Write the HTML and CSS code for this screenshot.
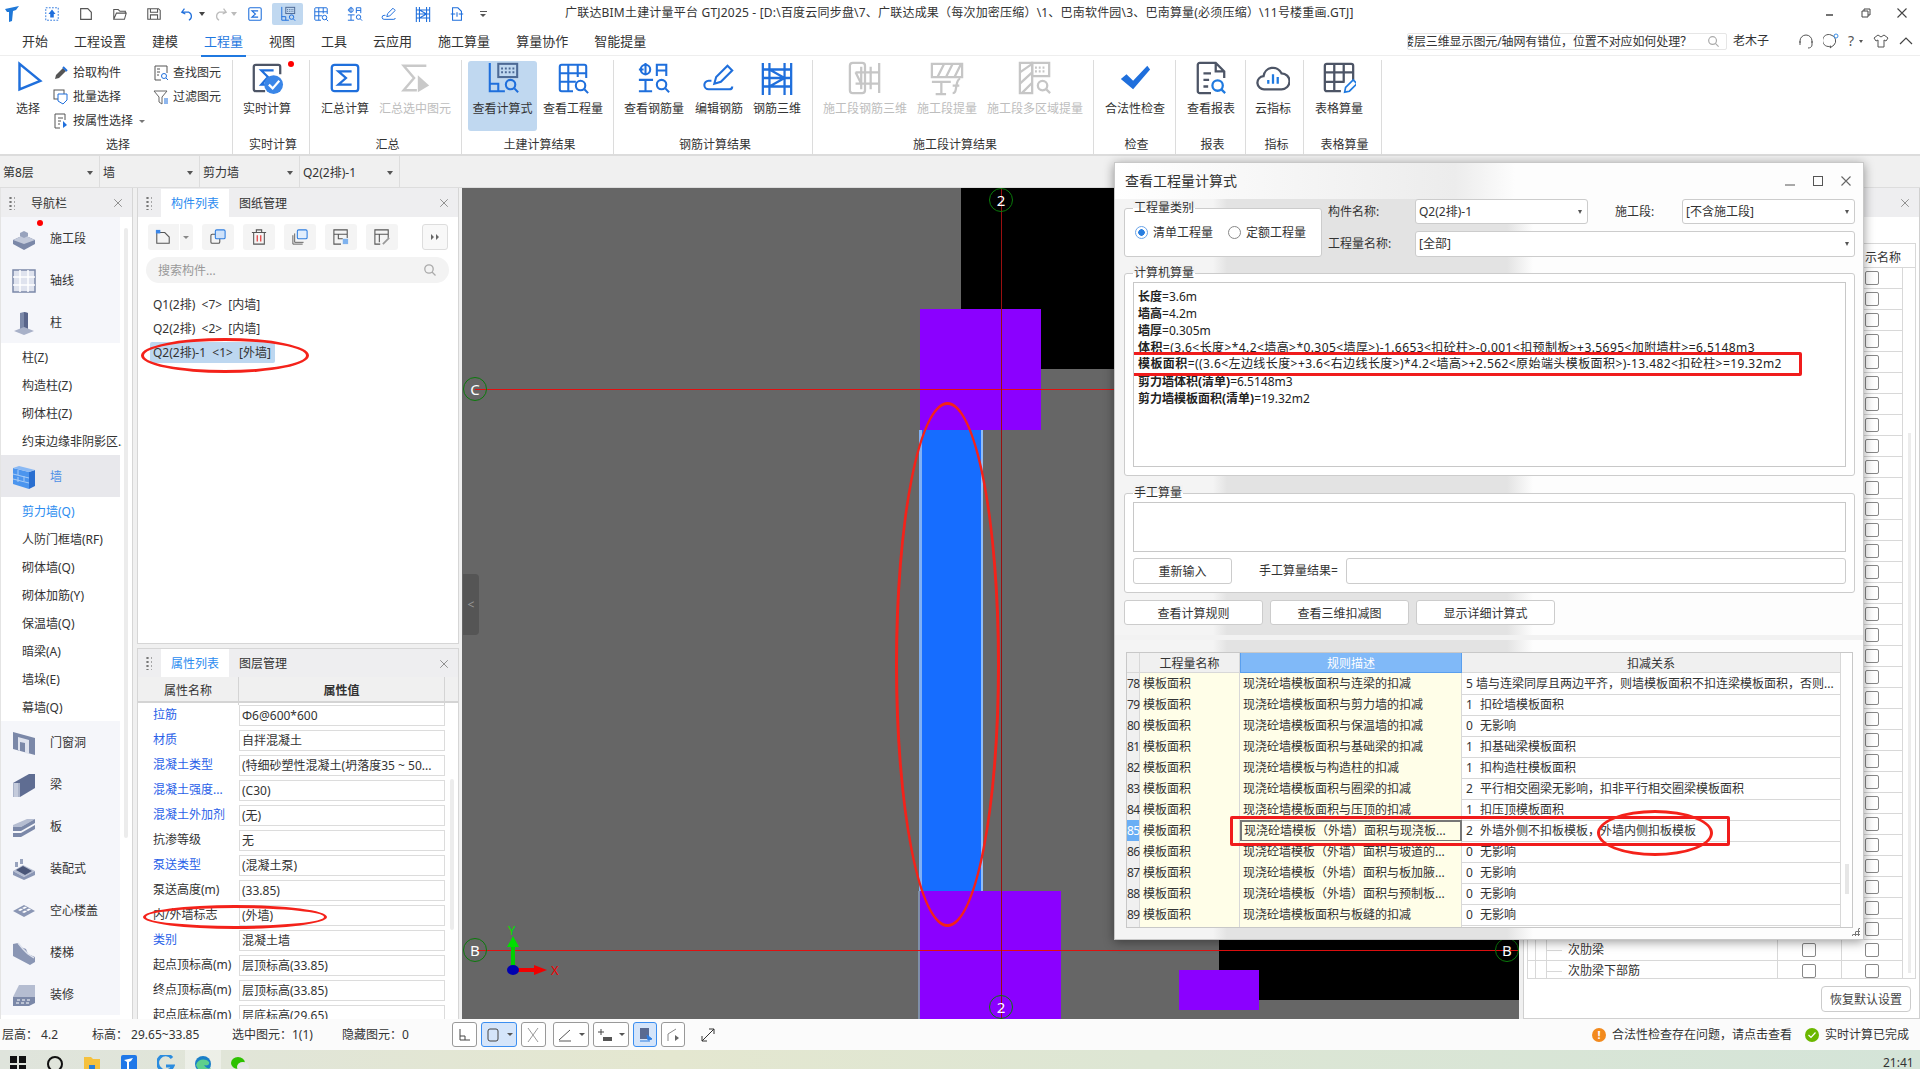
FILE: index.html
```html
<!DOCTYPE html>
<html lang="zh-CN">
<head>
    <meta charset="UTF-8">
    <title>广联达BIM土建计量平台 GTJ2025</title>
    <link rel="stylesheet" href="styles.css">
</head>
<body>
<svg class="sprite" xmlns="http://www.w3.org/2000/svg">
    <symbol id="s-x" viewBox="0 0 12 12"><path d="M1.5 1.5l9 9M10.5 1.5l-9 9" fill="none" stroke="currentColor" stroke-width="1.1"/></symbol>
    <symbol id="s-sigma" viewBox="0 0 36 36"><g fill="none" stroke="currentColor" stroke-width="2.4"><rect x="4" y="4" width="28" height="28" rx="3"/><path d="M25 11H11l8 7-8 7h14"/></g></symbol>
    <symbol id="s-calc" viewBox="0 0 36 36"><g fill="none" stroke="#1f6fdc" stroke-width="2.2"><path d="M4 2v30h16M4 24h9v8"/><rect x="13" y="3" width="20" height="14" stroke="#4d6a96"/><path d="M16 8h14M16 12h14" stroke="#4d6a96" stroke-dasharray="2 2"/><circle cx="26" cy="25" r="5"/><path d="M30 29l4 4"/></g></symbol>
    <symbol id="s-grid" viewBox="0 0 36 36"><g fill="none" stroke="#1f6fdc" stroke-width="2.2"><path d="M18 32H6a2 2 0 0 1-2-2V6a2 2 0 0 1 2-2h24a2 2 0 0 1 2 2v12M4 13h28M4 22h17M13 4v28M23 4v13"/><circle cx="26" cy="26" r="5"/><path d="M30 30l4 4"/></g></symbol>
    <symbol id="s-rebarq" viewBox="0 0 36 36"><g fill="none" stroke="#1f6fdc" stroke-width="2.2"><circle cx="9" cy="9" r="5"/><path d="M9 2v13M2 9h5"/><path d="M21 16V4h10v12M21 10h10"/><path d="M2 20h15M9 20v12M2 32h14"/><circle cx="26" cy="25" r="5"/><path d="M30 29l4 4"/></g></symbol>
    <symbol id="s-edit" viewBox="0 0 36 36"><g fill="none" stroke="#1f6fdc" stroke-width="2.2"><path d="M13 24l2-7L27 5l5 5-12 12z"/><path d="M10 21H7a4 4 0 0 0 0 9h22a3 3 0 0 0 3-3"/></g></symbol>
    <symbol id="s-3d" viewBox="0 0 36 36"><g fill="none" stroke="#1f6fdc" stroke-width="2.4"><path d="M3 2v34M10 2v34M26 2v34M33 2v34M3 9h30M3 18h30M3 27h30M10 9l16 9-16 9"/></g></symbol>
    <symbol id="s-st3d" viewBox="0 0 36 36"><g fill="none" stroke="#c6c6c6" stroke-width="2.4"><rect x="2" y="2" width="16" height="32" rx="3"/><path d="M8 12h26M8 24h26M14 6v24M24 6v24M33 2v32M8 12l6 12"/></g></symbol>
    <symbol id="s-stfx" viewBox="0 0 36 36"><g fill="none" stroke="#c6c6c6" stroke-width="2.4"><path d="M2 3h32v14H2zM8 17l7-14M17 17l7-14M26 17l7-14M2 22h20M12 22v13M6 35h11"/><path d="M24 34c3 0 3-2 4-8s2-7 4-7M24 26h7"/></g></symbol>
    <symbol id="s-stq" viewBox="0 0 36 36"><g fill="none" stroke="#c6c6c6" stroke-width="2.4"><rect x="2" y="2" width="13" height="32"/><path d="M2 12l13-9M2 24l13-12M4 34l11-11"/><rect x="15" y="2" width="18" height="14"/><path d="M18 7h12M18 11h12" stroke-dasharray="2 2"/><circle cx="26" cy="26" r="5"/><path d="M30 30l4 4"/></g></symbol>
    <symbol id="s-report" viewBox="0 0 36 36"><g fill="none" stroke="#4d5566" stroke-width="2.4"><path d="M18 34H6a2 2 0 0 1-2-2V4a2 2 0 0 1 2-2h17l9 9v7M23 2v9h9M10 13h8M10 20h6M10 27h5"/></g><circle cx="25" cy="26" r="5.5" fill="none" stroke="#1f7ae0" stroke-width="2.4"/><path d="M29 30l4 4" stroke="#1f7ae0" stroke-width="2.4"/></symbol>
    <symbol id="s-cloud" viewBox="0 0 36 36"><path d="M10 30H9a7 7 0 0 1-1-14 10 10 0 0 1 19-3 8.5 8.5 0 0 1 0 17z" fill="none" stroke="#4d5566" stroke-width="2.4"/><path d="M13 24v-4M18 24v-10M23 24v-7" stroke="#1f7ae0" stroke-width="2.4"/></symbol>
    <symbol id="s-tbl" viewBox="0 0 36 36"><g fill="none" stroke="#4d5566" stroke-width="2.4"><path d="M20 32H5a2 2 0 0 1-2-2V5a2 2 0 0 1 2-2h26a2 2 0 0 1 2 2v15M3 12h30M3 22h21M13 3v29M23 3v19"/></g><path d="M24 33l1-5 8-8 4 4-8 8z" fill="none" stroke="#1f7ae0" stroke-width="1.8"/></symbol>
    <symbol id="s-mag" viewBox="0 0 14 14"><circle cx="6" cy="6" r="4.2" fill="none" stroke="currentColor" stroke-width="1.3"/><path d="M9 9l3.5 3.5" stroke="currentColor" stroke-width="1.3"/></symbol>
    <symbol id="s-doc" viewBox="0 0 18 18"><path d="M3 3h8l4 4v8H3z" fill="none" stroke="currentColor" stroke-width="1.3"/></symbol>
</svg>

<header class="titlebar">
    <div class="qat">
        <svg class="qat-logo" viewBox="0 0 18 18"><path d="M1 4l14-3-3 4-3 1-1 10-3 1V7L3 7z" fill="#1f78d8"/></svg>
        <svg class="qi" viewBox="0 0 18 18"><rect x="2" y="2" width="14" height="14" fill="none" stroke="#1f6fdc" stroke-dasharray="2 1.5"/><path d="M9 4l4 5h-2v4H7V9H5z" fill="#1f6fdc"/></svg>
        <svg class="qi"><use href="#s-doc"/></svg>
        <svg class="qi" viewBox="0 0 18 18"><path d="M2 15V4h5l2 2h6v2M2 15h12l2-7H5z" fill="none" stroke="#555" stroke-width="1.2"/></svg>
        <svg class="qi" viewBox="0 0 18 18"><path d="M2 3h12l2 2v10H2zM5 3v4h8V3M5 15v-5h8v5" fill="none" stroke="#555" stroke-width="1.2"/></svg>
        <svg class="qi qi-undo" viewBox="0 0 18 18"><path d="M5 3L2 7l4 2M2 7h8a5 5 0 0 1 0 9" fill="none" stroke="#1f6fdc" stroke-width="1.4"/></svg>
        <span class="qdrop"></span>
        <svg class="qi qi-redo" viewBox="0 0 18 18"><path d="M13 3l3 4-4 2M16 7H8a5 5 0 0 0 0 9" fill="none" stroke="#bbb" stroke-width="1.4"/></svg>
        <span class="qdrop qdrop-off"></span>
        <svg class="qi qi-sum"><use href="#s-sigma"/></svg>
        <span class="qi-on"><svg class="qi"><use href="#s-calc"/></svg></span>
        <svg class="qi"><use href="#s-grid"/></svg>
        <svg class="qi"><use href="#s-rebarq"/></svg>
        <svg class="qi"><use href="#s-edit"/></svg>
        <svg class="qi"><use href="#s-3d"/></svg>
        <svg class="qi" viewBox="0 0 18 18"><path d="M4 2h6l4 4v10H4zM2 9h5M11 9h5M9 7v5" fill="none" stroke="#1f6fdc" stroke-width="1.2"/></svg>
        <span class="qmore"></span>
    </div>
    <div class="apptitle">广联达BIM土建计量平台 GTJ2025 - [D:\百度云同步盘\7、广联达成果（每次加密压缩）\1、巴南软件园\3、巴南算量(必须压缩）\11号楼重画.GTJ]</div>
    <div class="winbtns">
        <svg viewBox="0 0 12 12"><path d="M2 8h7" stroke="#444" stroke-width="1.5"/></svg>
        <svg viewBox="0 0 12 12"><path d="M2 4h6v6H2zM4 4V2h6v6H8" fill="none" stroke="#444"/></svg>
        <svg viewBox="0 0 12 12"><use href="#s-x"/></svg>
    </div>
</header>

<nav class="tabs">
    <ul class="tab-list">
        <li>开始</li>
        <li>工程设置</li>
        <li>建模</li>
        <li class="active">工程量</li>
        <li>视图</li>
        <li>工具</li>
        <li>云应用</li>
        <li>施工算量</li>
        <li>算量协作</li>
        <li>智能提量</li>
    </ul>
    <div class="tab-right">
        <div class="top-search"><span>楼层三维显示图元/轴网有错位，位置不对应如何处理？</span><svg><use href="#s-mag"/></svg></div>
        <div class="user">老木子</div>
        <div class="top-icons">
            <svg viewBox="0 0 16 16"><path d="M2 10V8a6 6 0 0 1 12 0v2M2 8v4M14 8v4M14 12c0 2-2 3-4 3" fill="none" stroke="#555"/></svg>
            <svg viewBox="0 0 16 16"><path d="M8 2a6 6 0 1 0 0 11l-1 2 4-3a6 6 0 0 0-3-10z" fill="none" stroke="#555"/><circle cx="13" cy="3" r="2" fill="none" stroke="#3a8ee6"/></svg>
            <span class="help">?<i></i></span>
            <svg viewBox="0 0 16 16"><path d="M5 2L1 5l2 3 2-1v7h6V7l2 1 2-3-4-3-3 2z" fill="none" stroke="#555"/></svg>
            <svg viewBox="0 0 16 16"><path d="M2 11l6-6 6 6" fill="none" stroke="#444" stroke-width="1.2"/></svg>
        </div>
    </div>
</nav>

<section class="ribbon">
    <div class="rb-group g-select">
        <div class="rb-row">
            <div class="rb-btn">
                <svg class="rb-ico" viewBox="0 0 36 36"><path d="M9 3v27l22-9z" fill="none" stroke="#1f6fdc" stroke-width="2.6"/></svg>
                <span>选择</span>
            </div>
            <div class="sm-cols">
                <div class="sm-col">
                    <div class="sm-btn"><svg viewBox="0 0 16 16"><path d="M2 14l1-4 7-7 3 3-7 7z" fill="#555"/><path d="M10 2l4 4" stroke="#1f6fdc" stroke-width="2"/></svg>拾取构件</div>
                    <div class="sm-btn"><svg viewBox="0 0 16 16"><rect x="1" y="1" width="10" height="9" fill="none" stroke="#555"/><path d="M5 5h9v6l-4 4-5-3z" fill="#fff" stroke="#1f6fdc"/></svg>批量选择</div>
                    <div class="sm-btn sm-drop"><svg viewBox="0 0 16 16"><path d="M2 1h10v6M2 1v14h5M5 5h5M5 8h3M5 11h2" fill="none" stroke="#555"/><path d="M10 8v7l4-3z" fill="#1f6fdc"/></svg>按属性选择<i></i></div>
                </div>
                <div class="sm-col">
                    <div class="sm-btn"><svg viewBox="0 0 16 16"><path d="M8 15H2V1h12v7M4 4h3M4 7h3M4 10h2" fill="none" stroke="#555"/><circle cx="11" cy="11" r="2.5" fill="none" stroke="#1f6fdc"/><path d="M13 13l2 2" stroke="#1f6fdc"/></svg>查找图元</div>
                    <div class="sm-btn"><svg viewBox="0 0 16 16"><path d="M1 2h13L9 8v7L6 13V8z" fill="none" stroke="#666"/><path d="M11 10h4M11 12h4M11 14h4" stroke="#1f6fdc"/></svg>过滤图元</div>
                </div>
            </div>
        </div>
        <div class="rb-label">选择</div>
    </div>

    <div class="rb-group g-real">
        <div class="rb-row">
            <div class="rb-btn rb-dot">
                <svg class="rb-ico" viewBox="0 0 36 36"><g fill="none" stroke="#4d5566" stroke-width="2.4"><path d="M16 32H6a2 2 0 0 1-2-2V6a2 2 0 0 1 2-2h24a2 2 0 0 1 2 2v8"/><path d="M25 10H12l7 7-7 8h4" stroke="#1f6fdc"/></g><circle cx="25" cy="25" r="10" fill="#3a86e8"/><path d="M20 25l4 4 7-8" fill="none" stroke="#fff" stroke-width="2.4"/></svg>
                <span>实时计算</span>
            </div>
        </div>
        <div class="rb-label">实时计算</div>
    </div>

    <div class="rb-group g-sum">
        <div class="rb-row">
            <div class="rb-btn"><svg class="rb-ico ico-blue"><use href="#s-sigma"/></svg><span>汇总计算</span></div>
            <div class="rb-btn off">
                <svg class="rb-ico" viewBox="0 0 36 36"><path d="M30 5H6l11 13L6 31h14" fill="none" stroke="#c9c9c9" stroke-width="2.6"/><path d="M21 15v18l12-7z" fill="#c9c9c9"/></svg>
                <span>汇总选中图元</span>
            </div>
        </div>
        <div class="rb-label">汇总</div>
    </div>

    <div class="rb-group g-civil">
        <div class="rb-row">
            <div class="rb-btn on"><svg class="rb-ico"><use href="#s-calc"/></svg><span>查看计算式</span></div>
            <div class="rb-btn"><svg class="rb-ico"><use href="#s-grid"/></svg><span>查看工程量</span></div>
        </div>
        <div class="rb-label">土建计算结果</div>
    </div>

    <div class="rb-group g-rebar">
        <div class="rb-row">
            <div class="rb-btn"><svg class="rb-ico"><use href="#s-rebarq"/></svg><span>查看钢筋量</span></div>
            <div class="rb-btn"><svg class="rb-ico"><use href="#s-edit"/></svg><span>编辑钢筋</span></div>
            <div class="rb-btn"><svg class="rb-ico"><use href="#s-3d"/></svg><span>钢筋三维</span></div>
        </div>
        <div class="rb-label">钢筋计算结果</div>
    </div>

    <div class="rb-group g-stage">
        <div class="rb-row">
            <div class="rb-btn off"><svg class="rb-ico"><use href="#s-st3d"/></svg><span>施工段钢筋三维</span></div>
            <div class="rb-btn off"><svg class="rb-ico"><use href="#s-stfx"/></svg><span>施工段提量</span></div>
            <div class="rb-btn off"><svg class="rb-ico"><use href="#s-stq"/></svg><span>施工段多区域提量</span></div>
        </div>
        <div class="rb-label">施工段计算结果</div>
    </div>

    <div class="rb-group g-check">
        <div class="rb-row">
            <div class="rb-btn">
                <svg class="rb-ico" viewBox="0 0 36 36"><path d="M3 19l6-5 7 7L31 5l3 4-18 21z" fill="#1f6fdc"/></svg>
                <span>合法性检查</span>
            </div>
        </div>
        <div class="rb-label">检查</div>
    </div>

    <div class="rb-group g-report">
        <div class="rb-row">
            <div class="rb-btn"><svg class="rb-ico"><use href="#s-report"/></svg><span>查看报表</span></div>
        </div>
        <div class="rb-label">报表</div>
    </div>

    <div class="rb-group g-index">
        <div class="rb-row">
            <div class="rb-btn"><svg class="rb-ico"><use href="#s-cloud"/></svg><span>云指标</span></div>
        </div>
        <div class="rb-label">指标</div>
    </div>

    <div class="rb-group g-table">
        <div class="rb-row">
            <div class="rb-btn"><svg class="rb-ico"><use href="#s-tbl"/></svg><span>表格算量</span></div>
        </div>
        <div class="rb-label">表格算量</div>
    </div>
</section>

<div class="combos">
    <div class="combo">第8层</div>
    <div class="combo">墙</div>
    <div class="combo">剪力墙</div>
    <div class="combo">Q2(2排)-1</div>
</div>

<main class="workspace">
    <aside class="nav">
        <div class="pane-head"><span class="grip"></span><span class="pane-title">导航栏</span><svg class="pane-x"><use href="#s-x"/></svg></div>
        <div class="nav-body">
            <div class="nav-block">
                <div class="nav-main nav-dot">
                    <svg viewBox="0 0 24 24"><path d="M12 8l11 5v4l-11 6L1 17v-4z" fill="#7b88a8"/><path d="M12 13L1 9l11-5 11 5z" fill="#c2c9da" transform="translate(0 4)"/><path d="M8 6l4-2 4 2v3l-4 2-4-2z" fill="#98a3bd"/></svg>
                    施工段
                </div>
                <div class="nav-main">
                    <svg viewBox="0 0 24 24"><rect x="1" y="1" width="22" height="22" fill="#dfe3ee" stroke="#7b88a8" stroke-width="1.5"/><path d="M8 1v22M16 1v22M1 8h22M1 16h22" stroke="#fff" stroke-width="1.5"/></svg>
                    轴线
                </div>
                <div class="nav-main">
                    <svg viewBox="0 0 24 24"><path d="M8 2l4-1 4 1v17H8z" fill="#7b88a8"/><path d="M12 1l4 1v17h-4z" fill="#59658a"/><path d="M2 20l10-4 10 4-10 4z" fill="#a8b1c8"/></svg>
                    柱
                </div>
            </div>
            <div class="nav-sub">柱(Z)</div>
            <div class="nav-sub">构造柱(Z)</div>
            <div class="nav-sub">砌体柱(Z)</div>
            <div class="nav-sub">约束边缘非阴影区...</div>
            <div class="nav-main nav-on">
                <svg viewBox="0 0 24 24"><path d="M1 3l16 4v17L1 19z" fill="#4c95ee"/><path d="M17 7l6-2v16l-6 3z" fill="#2a6fd0"/><path d="M1 3l6-2 16 4-6 2z" fill="#8ab9f4"/><path d="M1 9l16 4M1 14l16 4M6 5v5M12 11v5M6 12v5" stroke="#a8ccf7"/></svg>
                墙
            </div>
            <div class="nav-sub sub-on">剪力墙(Q)</div>
            <div class="nav-sub">人防门框墙(RF)</div>
            <div class="nav-sub">砌体墙(Q)</div>
            <div class="nav-sub">砌体加筋(Y)</div>
            <div class="nav-sub">保温墙(Q)</div>
            <div class="nav-sub">暗梁(A)</div>
            <div class="nav-sub">墙垛(E)</div>
            <div class="nav-sub">幕墙(Q)</div>
            <div class="nav-block">
                <div class="nav-main">
                    <svg viewBox="0 0 24 24"><path d="M1 1l22 6v17L1 18z" fill="#7b88a8"/><path d="M6 6l11 3v14l-4-1V12L8 11v9l-2-1z" fill="#dfe3ee"/></svg>
                    门窗洞
                </div>
                <div class="nav-main">
                    <svg viewBox="0 0 24 24"><path d="M1 10L17 1h6v14L8 24H1z" fill="#5f6d92"/><path d="M1 10h7v14H1z" fill="#aab3c9"/><path d="M3 10v14M5 10v14" stroke="#dfe3ee"/></svg>
                    梁
                </div>
                <div class="nav-main">
                    <svg viewBox="0 0 24 24"><path d="M1 10L15 4h8L9 12H1z" fill="#b5bdd1"/><path d="M1 12h8l14-8v4L9 16H1zM1 18h8l14-8v4L9 22H1z" fill="#7b88a8"/></svg>
                    板
                </div>
                <div class="nav-main">
                    <svg viewBox="0 0 24 24"><path d="M1 14l10-6 12 6-11 6z" fill="#b5bdd1"/><path d="M4 13l7-4 9 5-7 4z" fill="#4a5678"/><path d="M1 14l11 6v3L1 18zM23 14l-11 6v3l11-5z" fill="#8a96b4"/><path d="M3 5h3v5H3zM8 2h3v5H8z" fill="#98a3bd"/></svg>
                    装配式
                </div>
                <div class="nav-main">
                    <svg viewBox="0 0 24 24"><path d="M1 12L12 6l11 6-11 6z" fill="#8a96b4"/><path d="M6 11l3-1.5 2 1-3 1.5zM10 9l3-1.5 2 1-3 1.5zM10 13l3-1.5 2 1-3 1.5zM14 11l3-1.5 2 1-3 1.5z" fill="#fff"/></svg>
                    空心楼盖
                </div>
                <div class="nav-main">
                    <svg viewBox="0 0 24 24"><path d="M1 3l5-1 3 4 5 2 2 5 7 3v5l-5 3-17-9z" fill="#8a96b4"/><path d="M6 2l5 6M11 8l5 5M16 13l6 4" stroke="#dfe3ee" stroke-width="1.5"/></svg>
                    楼梯
                </div>
                <div class="nav-main">
                    <svg viewBox="0 0 24 24"><path d="M7 2h16v12H1z" fill="#b5bdd1"/><path d="M1 14h22v6L17 23H1z" fill="#7b88a8"/><path d="M5 17h3M10 17h3M15 17h3M4 20h3M9 20h3M14 20h3" stroke="#fff"/></svg>
                    装修
                </div>
            </div>
            <span class="nav-scroll"></span>
        </div>
    </aside>

    <div class="midcol">
        <section class="pane pane-list">
            <div class="pane-head">
                <span class="grip"></span>
                <span class="pane-tab cur">构件列表</span><span class="pane-tab">图纸管理</span>
                <svg class="pane-x"><use href="#s-x"/></svg>
            </div>
            <div class="tools">
                <span class="tool tool-split"><svg viewBox="0 0 18 18"><path d="M2 4h9l5 5v7H2z" fill="none" stroke="#555" stroke-width="1.2"/><rect x="1" y="1" width="5" height="4" fill="#3a86e8"/></svg><i></i></span>
                <span class="tool"><svg viewBox="0 0 18 18"><rect x="1" y="6" width="10" height="10" rx="1.5" fill="none" stroke="#555" stroke-width="1.2"/><rect x="6" y="1" width="11" height="10" rx="1.5" fill="#cfe2fa" stroke="#2f7ee0" stroke-width="1.2"/></svg></span>
                <span class="tool"><svg viewBox="0 0 18 18"><path d="M1 4h16M6 4V1h6v3M3 4v13h12V4" fill="none" stroke="#555" stroke-width="1.2"/><path d="M7 7v7M11 7v7" stroke="#e02020" stroke-width="1.2"/></svg></span>
                <span class="tool"><svg viewBox="0 0 18 18"><path d="M1 7v10h11M3 5v10h10" fill="none" stroke="#555"/><rect x="6" y="1" width="11" height="10" rx="1.5" fill="#e2eefc" stroke="#2f7ee0" stroke-width="1.2"/></svg></span>
                <span class="tool"><svg viewBox="0 0 18 18"><path d="M9 17H1V1h15v9M1 6h15M6 6v5h5" fill="none" stroke="#555" stroke-width="1.2"/><rect x="11" y="11" width="6" height="6" fill="#7fb2ee"/></svg></span>
                <span class="tool"><svg viewBox="0 0 18 18"><path d="M7 17H1V1h15v9M1 6h15M6 6v9" fill="none" stroke="#555" stroke-width="1.2"/><path d="M10 17l7-7" stroke="#999" stroke-width="2"/></svg></span>
                <span class="tool tool-more"><svg viewBox="0 0 10 10"><path d="M1 2l3 3-3 3zM6 2l3 3-3 3z" fill="#666"/></svg></span>
            </div>
            <div class="list-search"><span>搜索构件...</span><svg><use href="#s-mag"/></svg></div>
            <ul class="comp-list">
                <li>Q1(2排)&nbsp; &lt;7&gt;&nbsp; [内墙]</li>
                <li>Q2(2排)&nbsp; &lt;2&gt;&nbsp; [内墙]</li>
                <li class="comp-cur"><span>Q2(2排)-1&nbsp; &lt;1&gt;&nbsp; [外墙]</span></li>
            </ul>
            <span class="ring ring-list"></span>
        </section>

        <section class="pane pane-props">
            <div class="pane-head">
                <span class="grip"></span>
                <span class="pane-tab cur">属性列表</span><span class="pane-tab">图层管理</span>
                <svg class="pane-x"><use href="#s-x"/></svg>
            </div>
            <div class="prop-head"><div>属性名称</div><div>属性值</div></div>
            <div class="prop-row"><label class="lnk">拉筋</label><div>Φ6@600*600</div></div>
            <div class="prop-row"><label class="lnk">材质</label><div>自拌混凝土</div></div>
            <div class="prop-row"><label class="lnk">混凝土类型</label><div>(特细砂塑性混凝土(坍落度35 ~ 50...</div></div>
            <div class="prop-row"><label class="lnk">混凝土强度...</label><div>(C30)</div></div>
            <div class="prop-row"><label class="lnk">混凝土外加剂</label><div>(无)</div></div>
            <div class="prop-row"><label>抗渗等级</label><div>无</div></div>
            <div class="prop-row"><label class="lnk">泵送类型</label><div>(混凝土泵)</div></div>
            <div class="prop-row"><label>泵送高度(m)</label><div>(33.85)</div></div>
            <div class="prop-row"><label>内/外墙标志</label><div>(外墙)</div></div>
            <div class="prop-row"><label class="lnk">类别</label><div>混凝土墙</div></div>
            <div class="prop-row"><label>起点顶标高(m)</label><div>层顶标高(33.85)</div></div>
            <div class="prop-row"><label>终点顶标高(m)</label><div>层顶标高(33.85)</div></div>
            <div class="prop-row"><label>起点底标高(m)</label><div>层底标高(29.65)</div></div>
            <span class="prop-scroll"></span>
            <span class="ring ring-prop"></span>
        </section>
    </div>

    <section class="canvas">
        <div class="cv-black cv-b1"></div>
        <div class="cv-black cv-b2"></div>
        <div class="cv-purple cv-p1"></div>
        <div class="cv-wall"></div>
        <div class="cv-purple cv-p2"></div>
        <div class="cv-purple cv-p3"></div>
        <div class="axis-h axis-c"></div>
        <div class="axis-h axis-b"></div>
        <div class="axis-v"></div>
        <div class="mark mark-c">C</div>
        <div class="mark mark-b">B</div>
        <div class="mark mark-b2">B</div>
        <div class="mark mark-t">2</div>
        <div class="mark mark-d">2</div>
        <div class="cv-handle">&lt;</div>
        <svg class="ucs" viewBox="0 0 70 60">
            <path d="M12 44V18" stroke="#00d000" stroke-width="4"/><path d="M12 10l6 11H6z" fill="#00e000"/>
            <path d="M12 44h24" stroke="#f00000" stroke-width="4"/><path d="M46 44l-13 5v-10z" fill="#f00000"/>
            <ellipse cx="12" cy="44" rx="6" ry="5" fill="#0000b0"/>
            <text x="7" y="9" class="ucs-y">Y</text><text x="50" y="49" class="ucs-x">X</text>
        </svg>
        <span class="ring ring-wall"></span>
    </section>

    <aside class="rpanel">
        <div class="pane-head"><svg class="pane-x"><use href="#s-x"/></svg></div>
        <div class="rp-table">
            <div class="rp-head"><span>示名称</span></div>
            <div class="rp-row"><i></i><i></i></div>
            <div class="rp-row"><i></i><i></i></div>
            <div class="rp-row"><i></i><i></i></div>
            <div class="rp-row"><i></i><i></i></div>
            <div class="rp-row"><i></i><i></i></div>
            <div class="rp-row"><i></i><i></i></div>
            <div class="rp-row"><i></i><i></i></div>
            <div class="rp-row"><i></i><i></i></div>
            <div class="rp-row"><i></i><i></i></div>
            <div class="rp-row"><i></i><i></i></div>
            <div class="rp-row"><i></i><i></i></div>
            <div class="rp-row"><i></i><i></i></div>
            <div class="rp-row"><i></i><i></i></div>
            <div class="rp-row"><i></i><i></i></div>
            <div class="rp-row"><i></i><i></i></div>
            <div class="rp-row"><i></i><i></i></div>
            <div class="rp-row"><i></i><i></i></div>
            <div class="rp-row"><i></i><i></i></div>
            <div class="rp-row"><i></i><i></i></div>
            <div class="rp-row"><i></i><i></i></div>
            <div class="rp-row"><i></i><i></i></div>
            <div class="rp-row"><i></i><i></i></div>
            <div class="rp-row"><i></i><i></i></div>
            <div class="rp-row"><i></i><i></i></div>
            <div class="rp-row"><i></i><i></i></div>
            <div class="rp-row"><i></i><i></i></div>
            <div class="rp-row"><i></i><i></i></div>
            <div class="rp-row"><i></i><i></i></div>
            <div class="rp-row"><i></i><i></i></div>
            <div class="rp-row"><i></i><i></i></div>
            <div class="rp-row"><i></i><i></i></div>
            <div class="rp-row"><i></i><i></i></div>
            <div class="rp-row"><b>次肋梁</b><i></i><i></i></div>
            <div class="rp-row"><b>次肋梁下部筋</b><i></i><i></i></div>
            <span class="rp-scroll"></span>
        </div>
        <div class="rp-foot"><button class="rp-reset">恢复默认设置</button></div>
    </aside>
</main>

<footer class="status">
    <div class="st-info">
        <span class="st-a">层高：&nbsp;4.2</span>
        <span class="st-b">标高：&nbsp;29.65~33.85</span>
        <span class="st-c">选中图元：1(1)</span>
        <span class="st-d">隐藏图元：0</span>
    </div>
    <div class="st-tools">
        <span class="st-btn"><svg viewBox="0 0 16 16"><path d="M4 2v11h10M4 9h5v4" fill="none" stroke="#444"/></svg></span>
        <span class="st-btn wide act"><svg viewBox="0 0 16 16"><rect x="3" y="2" width="10" height="12" rx="2" fill="none" stroke="#444"/></svg><i></i></span>
        <span class="st-btn"><svg viewBox="0 0 16 16"><path d="M3 1l10 14M13 1L3 15" stroke="#999"/></svg></span>
        <span class="st-btn wide st-gap"><svg viewBox="0 0 16 16"><path d="M2 13L13 3M2 14h12" stroke="#555"/><path d="M2 14h12" stroke="#aaa" stroke-width="2"/></svg><i></i></span>
        <span class="st-btn wide"><svg viewBox="0 0 16 16"><path d="M1 5h6M4 2v6" stroke="#444"/><rect x="6" y="10" width="9" height="4" fill="#555"/></svg><i></i></span>
        <span class="st-btn nr act"><svg viewBox="0 0 16 16"><rect x="3" y="1" width="9" height="11" fill="#5a6a90"/><path d="M3 14h10M10 8l5 4-4 1z" stroke="#2f7ee0" fill="#2f7ee0"/></svg></span>
        <span class="st-btn nr"><svg viewBox="0 0 16 16"><path d="M3 14V7l8-5" fill="none" stroke="#888"/><path d="M10 8v6l4-3z" fill="#666"/></svg></span>
        <svg class="st-expand" viewBox="0 0 16 16"><path d="M2 14L14 2M9 2h5v5M2 9v5h5" fill="none" stroke="#333"/></svg>
    </div>
    <div class="st-msgs">
        <span class="st-warn">!</span><span>合法性检查存在问题，请点击查看</span>
        <svg class="st-ok" viewBox="0 0 14 14"><circle cx="7" cy="7" r="7" fill="#6bb700"/><path d="M3.5 7l2.5 2.5 4.5-5" fill="none" stroke="#fff" stroke-width="1.2"/></svg><span>实时计算已完成</span>
    </div>
</footer>

<div class="taskbar">
    <svg class="tk" viewBox="0 0 18 18"><path d="M1 1h7v7H1zM10 1h7v7h-7zM1 10h7v7H1zM10 10h7v7h-7z" fill="#111"/></svg>
    <svg class="tk" viewBox="0 0 18 18"><circle cx="9" cy="9" r="7" fill="none" stroke="#111" stroke-width="2"/></svg>
    <svg class="tk" viewBox="0 0 18 18"><path d="M1 2h7l2 2h7v13H1z" fill="#f5c13e"/><rect x="6" y="10" width="6" height="5" fill="#2a7fd8"/></svg>
    <svg class="tk" viewBox="0 0 18 18"><rect x="1" y="0" width="16" height="18" rx="2" fill="#1f78e8"/><path d="M4 5l9-2-2 3-2 1v7H7V7z" fill="#fff"/></svg>
    <svg class="tk" viewBox="0 0 18 18"><path d="M15 3A8 8 0 1 0 16 11H9" fill="none" stroke="#2b8cdf" stroke-width="3"/></svg>
    <span class="tk-on"><svg class="tk" viewBox="0 0 18 18"><circle cx="9" cy="9" r="8" fill="#1a7fc8"/><path d="M2 10c2-6 9-7 13-3 1 3-2 4-5 3 3 4 5 4 7 3-2 4-9 5-13 1z" fill="#5ed08c"/></svg></span>
    <svg class="tk" viewBox="0 0 18 18"><ellipse cx="7" cy="8" rx="7" ry="6" fill="#2dc100"/><ellipse cx="12" cy="12" rx="6" ry="5" fill="#e6e6e6"/></svg>
    <div class="clock">21:41</div>
</div>

<section class="dialog">
    <div class="dlg-title">
        <span>查看工程量计算式</span>
        <div class="dlg-btns">
            <svg viewBox="0 0 12 12"><path d="M1 10h10" stroke="#555"/></svg>
            <svg viewBox="0 0 12 12"><rect x="1.5" y="1.5" width="9" height="9" fill="none" stroke="#555"/></svg>
            <svg viewBox="0 0 12 12"><use href="#s-x"/></svg>
        </div>
    </div>

    <div class="dlg-top">
        <div class="gbox gbox-kind">
            <span class="gb-label">工程量类别</span>
            <span class="radio checked"></span><span class="radio-text">清单工程量</span>
            <span class="radio radio2"></span><span class="radio-text">定额工程量</span>
        </div>
        <div class="dlg-form">
            <label>构件名称:</label><div class="sel">Q2(2排)-1</div>
            <label class="lb2">施工段:</label><div class="sel">[不含施工段]</div>
            <label>工程量名称:</label><div class="sel sel-wide">[全部]</div>
        </div>
    </div>

    <div class="gbox gbox-calc">
        <span class="gb-label">计算机算量</span>
        <div class="calc-text">
            <p><b>长度</b>=3.6m</p>
            <p><b>墙高</b>=4.2m</p>
            <p><b>墙厚</b>=0.305m</p>
            <p class="long"><b>体积</b>=(3.6&lt;长度&gt;*4.2&lt;墙高&gt;*0.305&lt;墙厚&gt;)-1.6653&lt;扣砼柱&gt;-0.001&lt;扣预制板&gt;+3.5695&lt;加附墙柱&gt;=6.5148m3</p>
            <p class="hl long"><b>模板面积</b>=((3.6&lt;左边线长度&gt;+3.6&lt;右边线长度&gt;)*4.2&lt;墙高&gt;+2.562&lt;原始端头模板面积&gt;)-13.482&lt;扣砼柱&gt;=19.32m2</p>
            <p><b>剪力墙体积(清单)</b>=6.5148m3</p>
            <p><b>剪力墙模板面积(清单)</b>=19.32m2</p>
        </div>
    </div>

    <div class="gbox gbox-hand">
        <span class="gb-label">手工算量</span>
        <div class="hand-area"></div>
        <div class="hand-row">
            <button class="btn btn-re">重新输入</button>
            <span class="hand-lb">手工算量结果=</span>
            <div class="hand-input"></div>
        </div>
    </div>

    <div class="dlg-actions">
        <button class="btn">查看计算规则</button>
        <button class="btn">查看三维扣减图</button>
        <button class="btn">显示详细计算式</button>
    </div>
    <div class="dlg-split"></div>

    <div class="rules">
        <div class="r-row r-head"><div></div><div>工程量名称</div><div class="cur">规则描述</div><div>扣减关系</div></div>
        <div class="r-row"><div>78</div><div>模板面积</div><div>现浇砼墙模板面积与连梁的扣减</div><div>5 墙与连梁同厚且两边平齐，则墙模板面积不扣连梁模板面积，否则...</div></div>
        <div class="r-row"><div>79</div><div>模板面积</div><div>现浇砼墙模板面积与剪力墙的扣减</div><div><em>1</em>扣砼墙模板面积</div></div>
        <div class="r-row"><div>80</div><div>模板面积</div><div>现浇砼墙模板面积与保温墙的扣减</div><div><em>0</em>无影响</div></div>
        <div class="r-row"><div>81</div><div>模板面积</div><div>现浇砼墙模板面积与基础梁的扣减</div><div><em>1</em>扣基础梁模板面积</div></div>
        <div class="r-row"><div>82</div><div>模板面积</div><div>现浇砼墙模板与构造柱的扣减</div><div><em>1</em>扣构造柱模板面积</div></div>
        <div class="r-row"><div>83</div><div>模板面积</div><div>现浇砼墙模板面积与圈梁的扣减</div><div><em>2</em>平行相交圈梁无影响，扣非平行相交圈梁模板面积</div></div>
        <div class="r-row"><div>84</div><div>模板面积</div><div>现浇砼墙模板面积与压顶的扣减</div><div><em>1</em>扣压顶模板面积</div></div>
        <div class="r-row r-sel"><div>85</div><div>模板面积</div><div>现浇砼墙模板（外墙）面积与现浇板...</div><div><em>2</em>外墙外侧不扣板模板，外墙内侧扣板模板</div></div>
        <div class="r-row"><div>86</div><div>模板面积</div><div>现浇砼墙模板（外墙）面积与坡道的...</div><div><em>0</em>无影响</div></div>
        <div class="r-row"><div>87</div><div>模板面积</div><div>现浇砼墙模板（外墙）面积与板加腋...</div><div><em>0</em>无影响</div></div>
        <div class="r-row"><div>88</div><div>模板面积</div><div>现浇砼墙模板（外墙）面积与预制板...</div><div><em>0</em>无影响</div></div>
        <div class="r-row"><div>89</div><div>模板面积</div><div>现浇砼墙模板面积与板缝的扣减</div><div><em>0</em>无影响</div></div>
        <div class="r-row"><div></div><div></div><div></div><div></div></div>
        <span class="r-scroll"></span>
    </div>
    <span class="rmark-box"></span>
    <span class="ring ring-rule"></span>
    <span class="grip-corner"></span>
</section>
</body>
</html>
```
FILE: styles.css
```css
* {
    margin: 0;
    padding: 0;
    box-sizing: border-box;
}

html, body {
    width: 1920px;
    height: 1069px;
    overflow: hidden;
}

body {
    position: relative;
    display: flex;
    flex-direction: column;
    background: #f0f0f0;
    color: #333;
    font: 12px/16px "Noto Sans", "Noto Sans CJK SC", sans-serif;
}

ul {
    list-style: none;
}

.sprite {
    position: absolute;
    width: 0;
    height: 0;
}

/* title bar */
.titlebar {
    position: relative;
    height: 27px;
    background: #fff;
    display: flex;
    align-items: center;
}

.qat {
    display: flex;
    align-items: center;
    padding-left: 4px;
}

.qat-logo {
    width: 18px;
    height: 18px;
    margin-right: 22px;
}

.qi {
    width: 16px;
    height: 16px;
    margin-right: 18px;
    color: #555;
    flex: none;
}

.qi-undo {
    margin-right: 3px;
}

.qi-redo {
    margin-left: 7px;
    margin-right: 3px;
}

.qdrop {
    width: 0;
    height: 0;
    border: 3px solid transparent;
    border-top: 4px solid #444;
    border-bottom: 0;
}

.qdrop-off {
    border-top-color: #bbb;
}

.qi-sum {
    margin-left: 10px;
    color: #1f6fdc;
}

.qi-on {
    width: 31px;
    height: 22px;
    margin: 0 10px 0 -9px;
    border-radius: 2px;
    background: #c0d8f0;
    display: flex;
    align-items: center;
    justify-content: center;
}

.qi-on .qi {
    margin: 0;
}

.qmore {
    position: relative;
    width: 7px;
    height: 6px;
    margin-left: -3px;
    border-top: 1px solid #555;
}

.qmore::after {
    content: "";
    position: absolute;
    left: 0;
    top: 2px;
    border: 3px solid transparent;
    border-top: 3px solid #555;
    border-bottom: 0;
}

.apptitle {
    position: absolute;
    left: 565px;
    top: 5px;
    white-space: nowrap;
    letter-spacing: 0.2px;
}

.winbtns {
    position: absolute;
    right: 12px;
    top: 7px;
    display: flex;
    gap: 24px;
}

.winbtns svg {
    width: 12px;
    height: 12px;
    color: #444;
}

/* menu tabs */
.tabs {
    height: 29px;
    background: #fff;
    border-bottom: 1px solid #eee;
    display: flex;
    justify-content: space-between;
    align-items: center;
}

.tab-list {
    display: flex;
    padding-left: 9px;
    font-size: 13px;
}

.tab-list li {
    position: relative;
    padding: 0 13px;
    line-height: 29px;
}

.tab-list .active {
    color: #1f78e0;
}

.tab-list .active::after {
    content: "";
    position: absolute;
    left: 10px;
    right: 10px;
    bottom: -1px;
    height: 2px;
    background: #1f78e0;
}

.tab-right {
    display: flex;
    align-items: center;
    padding-right: 6px;
}

.top-search {
    position: relative;
    width: 320px;
    height: 17px;
    border: 1px solid #e6e6e6;
    border-radius: 2px;
    overflow: hidden;
    white-space: nowrap;
    line-height: 15px;
}

.top-search span {
    display: block;
    margin-left: -6px;
    letter-spacing: -0.1px;
}

.top-search svg {
    position: absolute;
    right: 6px;
    top: 1px;
    width: 13px;
    height: 13px;
    color: #aaa;
    background: #fff;
}

.user {
    width: 36px;
    margin: 0 29px 0 6px;
}

.top-icons {
    display: flex;
    align-items: center;
    gap: 9px;
}

.top-icons svg {
    width: 16px;
    height: 16px;
}

.help {
    position: relative;
    width: 16px;
    font-size: 14px;
    color: #555;
}

.help i {
    position: absolute;
    right: 1px;
    top: 7px;
    border: 2px solid transparent;
    border-top: 3px solid #555;
    border-bottom: 0;
}

/* ribbon */
.ribbon {
    height: 100px;
    background: #fff;
    border-bottom: 2px solid #dcdcdc;
    display: flex;
    padding-top: 1px;
}

.rb-group {
    display: flex;
    flex-direction: column;
    border-right: 1px solid #dcdcdc;
    height: 94px;
    margin-top: 3px;
}

.rb-row {
    display: grid;
    height: 71px;
    grid-auto-flow: column;
    margin-top: 1px;
}

.rb-label {
    text-align: center;
    padding-left: 4px;
    margin-top: 4px;
    line-height: 18px;
}

.rb-btn {
    position: relative;
    display: flex;
    flex-direction: column;
    align-items: center;
    border-radius: 3px;
    white-space: nowrap;
    height: 70px;
}

.rb-btn span {
    position: absolute;
    top: 40px;
    line-height: 16px;
}

.rb-ico {
    width: 34px;
    height: 36px;
    margin-top: -1px;
    color: #4d5566;
}

.ico-blue {
    color: #1f6fdc;
}

.rb-btn.on {
    background: #c0d8f0;
}

.rb-btn.off {
    color: #bdbdbd;
}

.rb-dot::after {
    content: "";
    position: absolute;
    right: 7px;
    top: 0;
    width: 6px;
    height: 6px;
    border-radius: 50%;
    background: #f00;
}

.g-select { width: 233px; }
.g-select .rb-row { grid-template-columns: 56px 1fr; }
.g-real { width: 77px; }
.g-real .rb-row { grid-template-columns: 68px; }
.g-sum { width: 152px; }
.g-sum .rb-row { grid-template-columns: 70px 70px; }
.g-civil { width: 152px; }
.g-civil .rb-row { grid-template-columns: 69px 72px; padding-left: 6px; }
.g-rebar { width: 199px; }
.g-rebar .rb-row { grid-template-columns: 66px 64px 52px; padding-left: 7px; }
.g-stage { width: 281px; }
.g-stage .rb-row { grid-template-columns: 84px 60px 96px; column-gap: 10px; padding-left: 10px; }
.g-check { width: 82px; }
.g-check .rb-row { grid-template-columns: 64px; padding-left: 9px; }
.g-report { width: 70px; }
.g-report .rb-row { grid-template-columns: 60px; padding-left: 5px; }
.g-index { width: 58px; }
.g-index .rb-row { grid-template-columns: 48px; padding-left: 3px; }
.g-table { width: 78px; }
.g-table .rb-row { grid-template-columns: 60px; padding-left: 5px; }

.sm-cols {
    display: flex;
    margin-left: -3px;
}

.sm-col {
    width: 100px;
}

.sm-btn {
    display: flex;
    align-items: center;
    gap: 4px;
    height: 24px;
    white-space: nowrap;
}

.sm-btn svg {
    width: 16px;
    height: 16px;
    flex: none;
}

.sm-drop i {
    border: 3px solid transparent;
    border-top: 3px solid #777;
    border-bottom: 0;
    margin-left: 2px;
}

/* floor / type combos */
.combos {
    height: 32px;
    background: #f0f0f0;
    display: flex;
    border-bottom: 1px solid #ddd;
}

.combo {
    position: relative;
    width: 100px;
    padding-left: 3px;
    line-height: 34px;
    border-right: 1px solid #ddd;
}

.combo::after {
    content: "";
    position: absolute;
    right: 6px;
    top: 15px;
    border: 3px solid transparent;
    border-top: 4px solid #555;
    border-bottom: 0;
}

/* main area */
.workspace {
    height: 831px;
    display: flex;
    overflow: hidden;
}

.pane-head {
    position: relative;
    height: 29px;
    background: #eeeef0;
    display: flex;
    align-items: flex-end;
}

.pane-title {
    margin: 0 0 5px 16px;
}

.grip {
    width: 7px;
    height: 14px;
    margin: 0 0 7px 7px;
    background: radial-gradient(circle, #777 1px, transparent 1.3px) 0 0 / 5px 4px;
}

.pane-x {
    position: absolute;
    right: 9px;
    top: 10px;
    width: 10px;
    height: 10px;
    color: #888;
}

.nav {
    width: 133px;
    background: #fff;
    border-right: 1px solid #d6d6d6;
    border-left: 1px solid #e4e4e4;
    flex: none;
}

.nav-body {
    position: relative;
    height: 802px;
    overflow: hidden;
}

.nav-block {
    width: 119px;
    background: #f5f6fa;
}

.nav-main {
    display: flex;
    align-items: center;
    gap: 14px;
    width: 119px;
    height: 42px;
    padding: 2px 0 0 11px;
    position: relative;
}

.nav-main svg {
    width: 24px;
    height: 24px;
    flex: none;
}

.nav-on {
    background: #e8e8ec;
    color: #4d8fe6;
}

.nav-dot::after {
    content: "";
    position: absolute;
    left: 36px;
    top: 3px;
    width: 6px;
    height: 6px;
    border-radius: 50%;
    background: #f00;
}

.nav-sub {
    height: 28px;
    line-height: 30px;
    padding-left: 21px;
    white-space: nowrap;
    width: 121px;
    overflow: hidden;
}

.sub-on {
    color: #2b8cf0;
}

.nav-scroll {
    position: absolute;
    left: 123px;
    top: 11px;
    width: 4px;
    height: 610px;
    background: #ececec;
    border-radius: 2px;
}

.midcol {
    width: 329px;
    padding-left: 4px;
    padding-right: 3px;
    flex: none;
    display: flex;
    flex-direction: column;
    gap: 4px;
}

.pane {
    position: relative;
    background: #fff;
    border: 1px solid #d6d6d6;
    border-top: 0;
}

.pane-list {
    height: 456px;
}

.pane-props {
    height: 371px;
    overflow: hidden;
    border-bottom: 0;
}

.pane-props .pane-head {
    border-top: 1px solid #d6d6d6;
}

.pane-tab {
    width: 68px;
    height: 28px;
    line-height: 30px;
    text-align: center;
}

.pane-tab.cur {
    margin-left: 9px;
    background: #fff;
    color: #2b8cf0;
}

.tools {
    display: flex;
    gap: 9px;
    padding: 7px 0 0 10px;
    height: 33px;
}

.tool {
    position: relative;
    width: 32px;
    height: 26px;
    background: #f4f4f4;
    border-radius: 3px;
    display: flex;
    align-items: center;
    justify-content: center;
}

.tool svg {
    width: 16px;
    height: 16px;
}

.tool-split {
    width: 45px;
    justify-content: flex-start;
    padding-left: 7px;
}

.tool-split i {
    position: absolute;
    right: 4px;
    top: 12px;
    border: 3px solid transparent;
    border-top: 3px solid #888;
    border-bottom: 0;
}

.tool-split::after {
    content: "";
    position: absolute;
    right: 13px;
    top: 0;
    width: 1px;
    height: 26px;
    background: #fff;
}

.tool-more {
    width: 26px;
    margin-left: 15px;
    border: 1px solid #ddd;
    background: #f8f8f8;
}

.tool-more svg {
    width: 10px;
    height: 10px;
}

.list-search {
    position: relative;
    margin: 7px 9px 0 8px;
    height: 26px;
    border-radius: 13px;
    background: #f3f3f3;
    color: #999;
    line-height: 28px;
    padding-left: 12px;
}

.list-search svg {
    position: absolute;
    right: 12px;
    top: 6px;
    width: 14px;
    height: 14px;
    color: #aaa;
}

.comp-list {
    padding: 10px 0 0 15px;
}

.comp-list li {
    height: 24px;
    line-height: 24px;
    white-space: nowrap;
}

.comp-cur span {
    display: inline-block;
    background: #bdd7f0;
    margin-left: -3px;
    padding: 0 4px 0 3px;
    height: 21px;
    line-height: 21px;
    border-radius: 2px;
}

.ring {
    position: absolute;
    border: 3px solid #f4221a;
    border-radius: 50%;
    pointer-events: none;
}

.ring-list {
    left: 3px;
    top: 150px;
    width: 168px;
    height: 35px;
}

.prop-head {
    display: grid;
    grid-template-columns: 100px 207px;
    height: 26px;
    line-height: 28px;
    text-align: center;
    background: #f0f0f0;
    border-bottom: 2px solid #d4d4d4;
}

.prop-head div + div {
    border-left: 1px solid #d4d4d4;
    border-right: 1px solid #d4d4d4;
    font-weight: 700;
}

.prop-row {
    display: grid;
    grid-template-columns: 101px 206px;
    height: 25px;
    padding-top: 2px;
    line-height: 20px;
    white-space: nowrap;
}

.prop-row label {
    padding-left: 15px;
}

.prop-row div {
    height: 21px;
    border: 1px solid #dcdcdc;
    padding-left: 2px;
    overflow: hidden;
}

.lnk {
    color: #2a5fe8;
}

.prop-scroll {
    position: absolute;
    left: 312px;
    top: 131px;
    width: 4px;
    height: 151px;
    background: #ececec;
    border-radius: 2px;
}

.ring-prop {
    left: 5px;
    top: 257px;
    width: 184px;
    height: 24px;
}

/* drawing canvas */
.canvas {
    position: relative;
    width: 1057px;
    height: 831px;
    background: #666;
    overflow: hidden;
    flex: none;
}

.cv-black {
    position: absolute;
    background: #000;
}

.cv-b1 {
    left: 499px;
    top: 0;
    width: 558px;
    height: 181px;
}

.cv-b2 {
    left: 757px;
    top: 752px;
    width: 300px;
    height: 60px;
}

.cv-purple {
    position: absolute;
    background: #8b00ff;
}

.cv-p1 {
    left: 458px;
    top: 121px;
    width: 121px;
    height: 121px;
}

.cv-wall {
    position: absolute;
    left: 457px;
    top: 242px;
    width: 64px;
    height: 461px;
    background: #166dff;
    border-left: 3px solid #7fb0f5;
    border-right: 2px solid #8fbcf8;
}

.cv-p2 {
    left: 458px;
    top: 703px;
    width: 141px;
    height: 128px;
    box-shadow: -2px 0 0 #7f8fa8;
}

.cv-p3 {
    left: 717px;
    top: 782px;
    width: 80px;
    height: 40px;
}

.axis-h {
    position: absolute;
    left: 13px;
    right: 0;
    height: 1px;
    background: #e01010;
}

.axis-c {
    top: 201px;
}

.axis-b {
    top: 762px;
}

.axis-v {
    position: absolute;
    left: 539px;
    top: 0;
    width: 1px;
    height: 831px;
    background: #9a1010;
}

.mark {
    position: absolute;
    width: 24px;
    height: 24px;
    border: 1px solid #0a7a0a;
    border-radius: 50%;
    color: #fff;
    font-size: 15px;
    line-height: 22px;
    text-align: center;
}

.mark-c {
    left: 1px;
    top: 189px;
}

.mark-b {
    left: 1px;
    top: 750px;
}

.mark-b2 {
    left: 1033px;
    top: 750px;
}

.mark-t {
    left: 527px;
    top: 0;
}

.mark-d {
    left: 527px;
    top: 807px;
}

.cv-handle {
    position: absolute;
    left: 1px;
    top: 386px;
    width: 16px;
    height: 61px;
    background: #555;
    border-radius: 0 4px 4px 0;
    color: #999;
    line-height: 61px;
    text-align: center;
}

.ucs {
    position: absolute;
    left: 39px;
    top: 738px;
    width: 70px;
    height: 60px;
}

.ucs text {
    font-size: 13px;
}

.ucs-y {
    fill: #00e000;
}

.ucs-x {
    fill: #f00000;
}

.ring-wall {
    left: 433px;
    top: 214px;
    width: 105px;
    height: 525px;
}

/* right panel, mostly behind the dialog */
.rpanel {
    position: relative;
    margin-left: 4px;
    width: 397px;
    background: #fff;
    border: 1px solid #d0d0d0;
    border-top: 0;
    flex: none;
}

.rp-table {
    position: relative;
    margin: 26px 0 0 3px;
    width: 389px;
    height: 736px;
    border: 1px solid #d8d8d8;
    overflow: hidden;
}

.rp-head {
    height: 24px;
    border-bottom: 1px solid #d8d8d8;
    position: relative;
}

.rp-head span {
    position: absolute;
    left: 337px;
    top: 6px;
}

.rp-row {
    position: relative;
    width: 375px;
    height: 21px;
    border-bottom: 1px solid #d8d8d8;
    border-right: 1px solid #d8d8d8;
    background: linear-gradient(#d8d8d8, #d8d8d8) 7px 0 / 1px 100% no-repeat,
        linear-gradient(#d8d8d8, #d8d8d8) 18px 0 / 1px 100% no-repeat,
        linear-gradient(#d8d8d8, #d8d8d8) 249px 0 / 1px 100% no-repeat,
        linear-gradient(#d8d8d8, #d8d8d8) 313px 0 / 1px 100% no-repeat;
}

.rp-row b {
    position: absolute;
    left: 40px;
    top: 2px;
    font-weight: 400;
}

.rp-row b::before {
    content: "";
    position: absolute;
    left: -22px;
    top: 8px;
    width: 16px;
    height: 1px;
    background: #d8d8d8;
}

.rp-row i {
    position: absolute;
    left: 274px;
    top: 3px;
    width: 14px;
    height: 14px;
    border: 1px solid #888;
    border-radius: 2px;
    background: #fff;
}

.rp-row i:last-child {
    left: 337px;
}

.rp-scroll {
    position: absolute;
    left: 380px;
    top: 189px;
    width: 3px;
    height: 540px;
    background: #ececec;
}

.rp-foot {
    display: flex;
    justify-content: flex-end;
    padding: 7px 8px 0 0;
}

.rp-reset {
    width: 90px;
    height: 26px;
    padding-top: 1px;
    background: #fff;
    border: 1px solid #ccc;
    border-radius: 4px;
    color: #444;
    font: inherit;
}

/* status bar */
.status {
    position: relative;
    height: 31px;
    background: #fbfbfb;
    display: flex;
    align-items: center;
}

.st-info {
    width: 452px;
    position: relative;
    height: 16px;
    white-space: nowrap;
}

.st-info span {
    position: absolute;
    top: 0;
}

.st-a { left: 2px; }
.st-b { left: 92px; }
.st-c { left: 232px; }
.st-d { left: 342px; }

.st-tools {
    display: flex;
    align-items: center;
    gap: 4px;
}

.st-btn {
    position: relative;
    width: 25px;
    height: 25px;
    background: #fff;
    border: 1px solid #999;
    border-radius: 3px;
    display: flex;
    align-items: center;
    padding-left: 3px;
}

.st-btn svg {
    width: 16px;
    height: 16px;
}

.st-btn.wide {
    width: 36px;
}

.st-btn.nr {
    width: 24px;
}

.st-gap {
    margin-left: 3px;
}

.st-btn.wide i {
    position: absolute;
    right: 3px;
    top: 10px;
    border: 3px solid transparent;
    border-top: 3px solid #555;
    border-bottom: 0;
}

.st-btn.act {
    background: #d5e5fa;
    border-color: #3b8ef0;
}

.st-expand {
    width: 16px;
    height: 16px;
    margin-left: 11px;
}

.st-msgs {
    margin-left: auto;
    padding-right: 11px;
    display: flex;
    align-items: center;
    gap: 6px;
}

.st-warn {
    width: 14px;
    height: 14px;
    border-radius: 50%;
    background: #f28a1e;
    color: #fff;
    text-align: center;
    font-size: 11px;
    font-weight: 700;
    line-height: 14px;
}

.st-ok {
    width: 14px;
    height: 14px;
    margin-left: 7px;
}

/* taskbar */
.taskbar {
    position: relative;
    height: 19px;
    background: linear-gradient(90deg, #dfe4dc 0, #e4e7d0 35%, #dde6d4 60%, #d4e4d8 100%);
    display: flex;
    padding: 5px 0 0 9px;
    gap: 19px;
    overflow: hidden;
}

.tk {
    width: 18px;
    height: 18px;
    flex: none;
}

.tk-on {
    margin: -5px -9px 0;
    padding: 5px 9px 0;
    height: 24px;
    background: rgba(255, 255, 255, 0.4);
}

.clock {
    position: absolute;
    left: 1883px;
    top: 5px;
}

/* quantity formula dialog */
.dialog {
    position: absolute;
    left: 1114px;
    top: 162px;
    width: 750px;
    height: 778px;
    padding: 0 8px 0 9px;
    border: 1px solid #c8c8c8;
    background: linear-gradient(90deg, #f4f4f4 0, #f4f4f4 98px, #e3e3e3 112px, #e3e3e3 392px, #fdfdfd 418px);
    box-shadow: 0 2px 10px rgba(0, 0, 0, 0.4);
}

.dlg-title {
    height: 36px;
    margin: 0 -8px 0 -9px;
    padding: 2px 0 0 10px;
    background: linear-gradient(90deg, #fff 0, #f4f4f4 200px, #ececec 340px, #fdfdfd 400px);
    font-size: 14px;
    line-height: 32px;
    position: relative;
}

.dlg-btns {
    position: absolute;
    right: 11px;
    top: 12px;
    display: flex;
    gap: 16px;
    color: #666;
}

.dlg-btns svg {
    width: 12px;
    height: 12px;
}

.dlg-top {
    display: flex;
    height: 58px;
    margin-top: 0;
}

.gbox {
    position: relative;
    background: #fff;
    border: 1px solid #ccc;
    border-radius: 3px;
}

.gb-label {
    position: absolute;
    left: 8px;
    top: -9px;
    line-height: 16px;
    background: linear-gradient(#f2f2f2 50%, #fff 50%);
    padding: 0 1px;
}

.gbox-kind {
    flex: none;
    width: 198px;
    height: 49px;
    margin-top: 9px;
    display: flex;
    align-items: center;
    padding-left: 10px;
}

.radio {
    width: 13px;
    height: 13px;
    border: 1px solid #888;
    border-radius: 50%;
    background: #fff;
    margin-right: 5px;
}

.radio.checked {
    border-color: #6aa4e8;
    background: radial-gradient(circle, #2a7fe0 3px, #fff 3.5px);
}

.radio2 {
    margin-left: 15px;
}

.dlg-form {
    display: grid;
    grid-template-columns: 87px 173px 94px 173px;
    grid-template-rows: 25px 26px;
    row-gap: 7px;
    margin-left: 6px;
    width: 527px;
}

.dlg-form label {
    line-height: 25px;
}

.dlg-form .lb2 {
    padding-left: 27px;
}

.sel {
    position: relative;
    background: #fff;
    border: 1px solid #ccc;
    border-radius: 3px;
    padding-left: 3px;
    line-height: 23px;
}

.sel::after {
    content: "";
    position: absolute;
    right: 5px;
    top: 10px;
    border: 2.5px solid transparent;
    border-top: 4px solid #555;
    border-bottom: 0;
}

.sel-wide {
    grid-column: 2 / 5;
}

.gbox-calc {
    height: 203px;
    margin-top: 16px;
    padding: 8px;
}

.calc-text {
    height: 185px;
    border: 1px solid #c8c8c8;
    padding: 5px 0 0 4px;
    overflow: hidden;
    white-space: nowrap;
    color: #222;
}

.calc-text p {
    height: 17px;
    line-height: 17px;
}

.calc-text .long {
    letter-spacing: 0.42px;
}

.calc-text .hl {
    position: relative;
    width: 671px;
    height: 24px;
    margin: -4px 0 -3px -7px;
    padding-left: 4px;
    border: 3px solid #f01c1c;
    border-radius: 2px;
    background: #fff;
    line-height: 18px;
}

.gbox-hand {
    height: 100px;
    margin-top: 17px;
    padding: 8px;
}

.hand-area {
    height: 50px;
    border: 1px solid #c8c8c8;
}

.hand-row {
    display: flex;
    align-items: center;
    margin-top: 6px;
    height: 26px;
}

.btn {
    height: 25px;
    width: 139px;
    padding-top: 2px;
    background: #fff;
    border: 1px solid #ccc;
    border-radius: 3px;
    color: #333;
    font: inherit;
}

.btn-re {
    width: 99px;
    height: 26px;
}

.hand-lb {
    margin-left: 27px;
    width: 87px;
    white-space: nowrap;
}

.hand-input {
    flex: 1;
    height: 26px;
    background: #fff;
    border: 1px solid #ccc;
    border-radius: 3px;
}

.dlg-actions {
    display: flex;
    gap: 7px;
    margin-top: 7px;
}

.dlg-split {
    height: 5px;
    margin: 10px -8px 0 -9px;
    background: #f2f2f2;
}

.rules {
    position: relative;
    margin: 12px 0 0 2px;
    width: 727px;
    height: 276px;
    background: #fff;
    border: 1px solid #c8c8c8;
    overflow: hidden;
}

.r-row {
    display: grid;
    grid-template-columns: 13px 100px 222px 378px;
    width: 714px;
    height: 21px;
    border-right: 1px solid #d8d8d8;
    white-space: nowrap;
    line-height: 21px;
}

.r-row > div {
    border-bottom: 1px solid #d8d8d8;
    border-right: 1px solid #d8d8d8;
    padding-left: 3px;
    overflow: hidden;
}

.r-row > div:first-child {
    padding-left: 0;
    text-align: center;
    background: #f0f0f0;
    letter-spacing: -0.5px;
    overflow: visible;
}

.r-row > div:nth-child(2),
.r-row > div:nth-child(3) {
    background: #fffee8;
}

.r-row > div:last-child {
    padding-left: 4px;
    border-right: 0;
}

.r-row em {
    display: inline-block;
    width: 14px;
    font-style: normal;
}

.r-head {
    height: 20px;
}

.r-head > div {
    text-align: center;
    background: #f0f0f0 !important;
    padding: 0 !important;
}

.r-head .cur {
    background: #80b9f8 !important;
    border: 1px solid #5a9fee;
    border-top: 0;
    color: #fff;
}

.r-sel > div:first-child {
    background: #6aaef5;
    color: #fff;
}

.r-sel > div:nth-child(3) {
    border: 2px solid #777;
    line-height: 17px;
    padding-left: 2px;
}

.r-scroll {
    position: absolute;
    left: 718px;
    top: 211px;
    width: 4px;
    height: 30px;
    background: #e6e6e6;
}

.rmark-box {
    position: absolute;
    left: 115px;
    top: 653px;
    width: 500px;
    height: 30px;
    border: 3px solid #f01c1c;
    border-radius: 2px;
}

.ring-rule {
    left: 482px;
    top: 647px;
    width: 116px;
    height: 46px;
}

.grip-corner {
    position: absolute;
    right: 3px;
    bottom: 3px;
    width: 9px;
    height: 9px;
    background: radial-gradient(circle, #777 1px, transparent 1.3px) 0 0 / 3px 3px;
    clip-path: polygon(100% 0, 100% 100%, 0 100%);
}
```
